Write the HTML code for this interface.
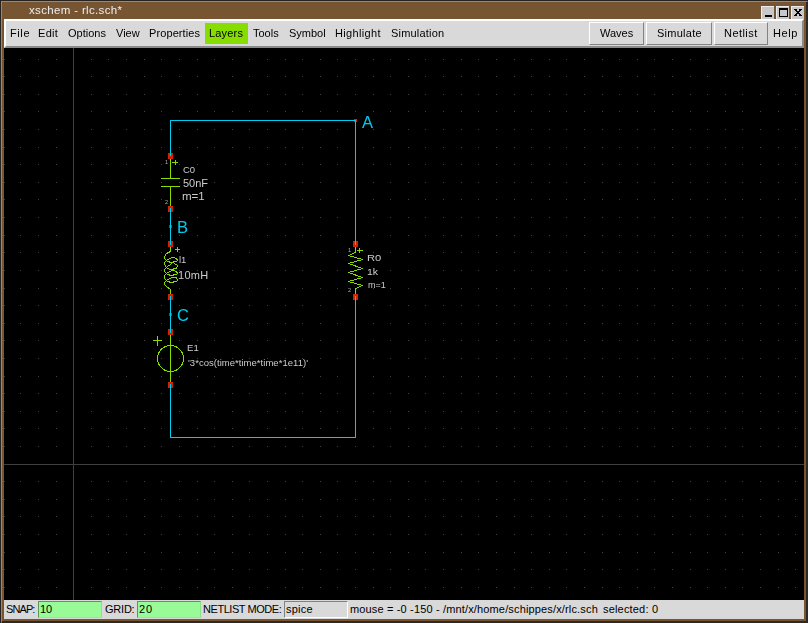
<!DOCTYPE html>
<html><head><meta charset="utf-8"><title>xschem - rlc.sch*</title>
<style>
*{margin:0;padding:0;box-sizing:border-box}
html,body{width:808px;height:623px;overflow:hidden;background:#775533;font-family:"Liberation Sans",sans-serif;position:relative}
.abs{position:absolute}
.t{position:absolute;white-space:pre;font-family:"Liberation Sans",sans-serif}
.btn{position:absolute;background:#d9d9d9;border-top:1px solid #fff;border-left:1px solid #fff;border-right:1px solid #828282;border-bottom:1px solid #828282}
.wb{position:absolute;top:6px;width:13px;height:13px;background:#c8c8c8;border-top:1px solid #ececec;border-left:1px solid #ececec}
</style></head><body>
<div class="abs" style="left:0;top:0;width:808px;height:1px;background:#262320"></div>
<div class="abs" style="left:0;top:0;width:1px;height:623px;background:#262320"></div>
<div class="abs" style="left:1px;top:1px;width:806px;height:1px;background:#c47e3a"></div>
<div class="abs" style="left:1px;top:1px;width:1px;height:621px;background:#c47e3a"></div>
<div class="abs" style="left:806px;top:2px;width:2px;height:621px;background:#2e2822"></div>
<div class="abs" style="left:2px;top:621px;width:806px;height:2px;background:#2e2822"></div>
<div class="wb" style="left:761px"><div class="abs" style="left:3px;top:8px;width:7px;height:2px;background:#000"></div></div>
<div class="wb" style="left:776px"><div class="abs" style="left:2px;top:1px;width:9px;height:9px;border:1px solid #000;border-top-width:2px"></div></div>
<div class="wb" style="left:791px"><div class="abs" style="left:2px;top:2px;width:3px;height:1px;background:#000"></div><div class="abs" style="left:7px;top:2px;width:3px;height:1px;background:#000"></div><div class="abs" style="left:3px;top:3px;width:2px;height:1px;background:#000"></div><div class="abs" style="left:7px;top:3px;width:2px;height:1px;background:#000"></div><div class="abs" style="left:4px;top:4px;width:4px;height:1px;background:#000"></div><div class="abs" style="left:5px;top:5px;width:2px;height:1px;background:#000"></div><div class="abs" style="left:4px;top:6px;width:4px;height:1px;background:#000"></div><div class="abs" style="left:3px;top:7px;width:2px;height:1px;background:#000"></div><div class="abs" style="left:7px;top:7px;width:2px;height:1px;background:#000"></div><div class="abs" style="left:2px;top:8px;width:3px;height:1px;background:#000"></div><div class="abs" style="left:7px;top:8px;width:3px;height:1px;background:#000"></div></div>
<div class="abs" style="left:4px;top:19px;width:800px;height:29px;background:#d9d9d9;border-top:2px solid #fff;border-left:2px solid #fff;border-right:2px solid #8a8a8a;border-bottom:2px solid #8a8a8a"></div>
<div class="abs" style="left:205px;top:23px;width:43px;height:21px;background:#88dd00"></div>
<div class="btn" style="left:589px;top:22px;width:55px;height:23px"></div>
<div class="btn" style="left:646px;top:22px;width:66px;height:23px"></div>
<div class="btn" style="left:714px;top:22px;width:54px;height:23px"></div>
<svg class="abs" style="left:4px;top:48px" width="800" height="552" viewBox="4 48 800 552">
<rect x="4" y="48" width="800" height="552" fill="#000"/>
<g fill="#404040" shape-rendering="crispEdges"><rect x="4" y="59" width="1" height="1"/><rect x="4" y="76" width="1" height="1"/><rect x="4" y="94" width="1" height="1"/><rect x="4" y="111" width="1" height="1"/><rect x="4" y="129" width="1" height="1"/><rect x="4" y="147" width="1" height="1"/><rect x="4" y="164" width="1" height="1"/><rect x="4" y="182" width="1" height="1"/><rect x="4" y="199" width="1" height="1"/><rect x="4" y="217" width="1" height="1"/><rect x="4" y="235" width="1" height="1"/><rect x="4" y="252" width="1" height="1"/><rect x="4" y="270" width="1" height="1"/><rect x="4" y="288" width="1" height="1"/><rect x="4" y="305" width="1" height="1"/><rect x="4" y="323" width="1" height="1"/><rect x="4" y="340" width="1" height="1"/><rect x="4" y="358" width="1" height="1"/><rect x="4" y="376" width="1" height="1"/><rect x="4" y="393" width="1" height="1"/><rect x="4" y="411" width="1" height="1"/><rect x="4" y="428" width="1" height="1"/><rect x="4" y="446" width="1" height="1"/><rect x="4" y="464" width="1" height="1"/><rect x="4" y="481" width="1" height="1"/><rect x="4" y="499" width="1" height="1"/><rect x="4" y="516" width="1" height="1"/><rect x="4" y="534" width="1" height="1"/><rect x="4" y="552" width="1" height="1"/><rect x="4" y="569" width="1" height="1"/><rect x="4" y="587" width="1" height="1"/><rect x="20" y="59" width="1" height="1"/><rect x="20" y="76" width="1" height="1"/><rect x="20" y="94" width="1" height="1"/><rect x="20" y="111" width="1" height="1"/><rect x="20" y="129" width="1" height="1"/><rect x="20" y="147" width="1" height="1"/><rect x="20" y="164" width="1" height="1"/><rect x="20" y="182" width="1" height="1"/><rect x="20" y="199" width="1" height="1"/><rect x="20" y="217" width="1" height="1"/><rect x="20" y="235" width="1" height="1"/><rect x="20" y="252" width="1" height="1"/><rect x="20" y="270" width="1" height="1"/><rect x="20" y="288" width="1" height="1"/><rect x="20" y="305" width="1" height="1"/><rect x="20" y="323" width="1" height="1"/><rect x="20" y="340" width="1" height="1"/><rect x="20" y="358" width="1" height="1"/><rect x="20" y="376" width="1" height="1"/><rect x="20" y="393" width="1" height="1"/><rect x="20" y="411" width="1" height="1"/><rect x="20" y="428" width="1" height="1"/><rect x="20" y="446" width="1" height="1"/><rect x="20" y="464" width="1" height="1"/><rect x="20" y="481" width="1" height="1"/><rect x="20" y="499" width="1" height="1"/><rect x="20" y="516" width="1" height="1"/><rect x="20" y="534" width="1" height="1"/><rect x="20" y="552" width="1" height="1"/><rect x="20" y="569" width="1" height="1"/><rect x="20" y="587" width="1" height="1"/><rect x="38" y="59" width="1" height="1"/><rect x="38" y="76" width="1" height="1"/><rect x="38" y="94" width="1" height="1"/><rect x="38" y="111" width="1" height="1"/><rect x="38" y="129" width="1" height="1"/><rect x="38" y="147" width="1" height="1"/><rect x="38" y="164" width="1" height="1"/><rect x="38" y="182" width="1" height="1"/><rect x="38" y="199" width="1" height="1"/><rect x="38" y="217" width="1" height="1"/><rect x="38" y="235" width="1" height="1"/><rect x="38" y="252" width="1" height="1"/><rect x="38" y="270" width="1" height="1"/><rect x="38" y="288" width="1" height="1"/><rect x="38" y="305" width="1" height="1"/><rect x="38" y="323" width="1" height="1"/><rect x="38" y="340" width="1" height="1"/><rect x="38" y="358" width="1" height="1"/><rect x="38" y="376" width="1" height="1"/><rect x="38" y="393" width="1" height="1"/><rect x="38" y="411" width="1" height="1"/><rect x="38" y="428" width="1" height="1"/><rect x="38" y="446" width="1" height="1"/><rect x="38" y="464" width="1" height="1"/><rect x="38" y="481" width="1" height="1"/><rect x="38" y="499" width="1" height="1"/><rect x="38" y="516" width="1" height="1"/><rect x="38" y="534" width="1" height="1"/><rect x="38" y="552" width="1" height="1"/><rect x="38" y="569" width="1" height="1"/><rect x="38" y="587" width="1" height="1"/><rect x="56" y="59" width="1" height="1"/><rect x="56" y="76" width="1" height="1"/><rect x="56" y="94" width="1" height="1"/><rect x="56" y="111" width="1" height="1"/><rect x="56" y="129" width="1" height="1"/><rect x="56" y="147" width="1" height="1"/><rect x="56" y="164" width="1" height="1"/><rect x="56" y="182" width="1" height="1"/><rect x="56" y="199" width="1" height="1"/><rect x="56" y="217" width="1" height="1"/><rect x="56" y="235" width="1" height="1"/><rect x="56" y="252" width="1" height="1"/><rect x="56" y="270" width="1" height="1"/><rect x="56" y="288" width="1" height="1"/><rect x="56" y="305" width="1" height="1"/><rect x="56" y="323" width="1" height="1"/><rect x="56" y="340" width="1" height="1"/><rect x="56" y="358" width="1" height="1"/><rect x="56" y="376" width="1" height="1"/><rect x="56" y="393" width="1" height="1"/><rect x="56" y="411" width="1" height="1"/><rect x="56" y="428" width="1" height="1"/><rect x="56" y="446" width="1" height="1"/><rect x="56" y="464" width="1" height="1"/><rect x="56" y="481" width="1" height="1"/><rect x="56" y="499" width="1" height="1"/><rect x="56" y="516" width="1" height="1"/><rect x="56" y="534" width="1" height="1"/><rect x="56" y="552" width="1" height="1"/><rect x="56" y="569" width="1" height="1"/><rect x="56" y="587" width="1" height="1"/><rect x="73" y="59" width="1" height="1"/><rect x="73" y="76" width="1" height="1"/><rect x="73" y="94" width="1" height="1"/><rect x="73" y="111" width="1" height="1"/><rect x="73" y="129" width="1" height="1"/><rect x="73" y="147" width="1" height="1"/><rect x="73" y="164" width="1" height="1"/><rect x="73" y="182" width="1" height="1"/><rect x="73" y="199" width="1" height="1"/><rect x="73" y="217" width="1" height="1"/><rect x="73" y="235" width="1" height="1"/><rect x="73" y="252" width="1" height="1"/><rect x="73" y="270" width="1" height="1"/><rect x="73" y="288" width="1" height="1"/><rect x="73" y="305" width="1" height="1"/><rect x="73" y="323" width="1" height="1"/><rect x="73" y="340" width="1" height="1"/><rect x="73" y="358" width="1" height="1"/><rect x="73" y="376" width="1" height="1"/><rect x="73" y="393" width="1" height="1"/><rect x="73" y="411" width="1" height="1"/><rect x="73" y="428" width="1" height="1"/><rect x="73" y="446" width="1" height="1"/><rect x="73" y="464" width="1" height="1"/><rect x="73" y="481" width="1" height="1"/><rect x="73" y="499" width="1" height="1"/><rect x="73" y="516" width="1" height="1"/><rect x="73" y="534" width="1" height="1"/><rect x="73" y="552" width="1" height="1"/><rect x="73" y="569" width="1" height="1"/><rect x="73" y="587" width="1" height="1"/><rect x="91" y="59" width="1" height="1"/><rect x="91" y="76" width="1" height="1"/><rect x="91" y="94" width="1" height="1"/><rect x="91" y="111" width="1" height="1"/><rect x="91" y="129" width="1" height="1"/><rect x="91" y="147" width="1" height="1"/><rect x="91" y="164" width="1" height="1"/><rect x="91" y="182" width="1" height="1"/><rect x="91" y="199" width="1" height="1"/><rect x="91" y="217" width="1" height="1"/><rect x="91" y="235" width="1" height="1"/><rect x="91" y="252" width="1" height="1"/><rect x="91" y="270" width="1" height="1"/><rect x="91" y="288" width="1" height="1"/><rect x="91" y="305" width="1" height="1"/><rect x="91" y="323" width="1" height="1"/><rect x="91" y="340" width="1" height="1"/><rect x="91" y="358" width="1" height="1"/><rect x="91" y="376" width="1" height="1"/><rect x="91" y="393" width="1" height="1"/><rect x="91" y="411" width="1" height="1"/><rect x="91" y="428" width="1" height="1"/><rect x="91" y="446" width="1" height="1"/><rect x="91" y="464" width="1" height="1"/><rect x="91" y="481" width="1" height="1"/><rect x="91" y="499" width="1" height="1"/><rect x="91" y="516" width="1" height="1"/><rect x="91" y="534" width="1" height="1"/><rect x="91" y="552" width="1" height="1"/><rect x="91" y="569" width="1" height="1"/><rect x="91" y="587" width="1" height="1"/><rect x="108" y="59" width="1" height="1"/><rect x="108" y="76" width="1" height="1"/><rect x="108" y="94" width="1" height="1"/><rect x="108" y="111" width="1" height="1"/><rect x="108" y="129" width="1" height="1"/><rect x="108" y="147" width="1" height="1"/><rect x="108" y="164" width="1" height="1"/><rect x="108" y="182" width="1" height="1"/><rect x="108" y="199" width="1" height="1"/><rect x="108" y="217" width="1" height="1"/><rect x="108" y="235" width="1" height="1"/><rect x="108" y="252" width="1" height="1"/><rect x="108" y="270" width="1" height="1"/><rect x="108" y="288" width="1" height="1"/><rect x="108" y="305" width="1" height="1"/><rect x="108" y="323" width="1" height="1"/><rect x="108" y="340" width="1" height="1"/><rect x="108" y="358" width="1" height="1"/><rect x="108" y="376" width="1" height="1"/><rect x="108" y="393" width="1" height="1"/><rect x="108" y="411" width="1" height="1"/><rect x="108" y="428" width="1" height="1"/><rect x="108" y="446" width="1" height="1"/><rect x="108" y="464" width="1" height="1"/><rect x="108" y="481" width="1" height="1"/><rect x="108" y="499" width="1" height="1"/><rect x="108" y="516" width="1" height="1"/><rect x="108" y="534" width="1" height="1"/><rect x="108" y="552" width="1" height="1"/><rect x="108" y="569" width="1" height="1"/><rect x="108" y="587" width="1" height="1"/><rect x="126" y="59" width="1" height="1"/><rect x="126" y="76" width="1" height="1"/><rect x="126" y="94" width="1" height="1"/><rect x="126" y="111" width="1" height="1"/><rect x="126" y="129" width="1" height="1"/><rect x="126" y="147" width="1" height="1"/><rect x="126" y="164" width="1" height="1"/><rect x="126" y="182" width="1" height="1"/><rect x="126" y="199" width="1" height="1"/><rect x="126" y="217" width="1" height="1"/><rect x="126" y="235" width="1" height="1"/><rect x="126" y="252" width="1" height="1"/><rect x="126" y="270" width="1" height="1"/><rect x="126" y="288" width="1" height="1"/><rect x="126" y="305" width="1" height="1"/><rect x="126" y="323" width="1" height="1"/><rect x="126" y="340" width="1" height="1"/><rect x="126" y="358" width="1" height="1"/><rect x="126" y="376" width="1" height="1"/><rect x="126" y="393" width="1" height="1"/><rect x="126" y="411" width="1" height="1"/><rect x="126" y="428" width="1" height="1"/><rect x="126" y="446" width="1" height="1"/><rect x="126" y="464" width="1" height="1"/><rect x="126" y="481" width="1" height="1"/><rect x="126" y="499" width="1" height="1"/><rect x="126" y="516" width="1" height="1"/><rect x="126" y="534" width="1" height="1"/><rect x="126" y="552" width="1" height="1"/><rect x="126" y="569" width="1" height="1"/><rect x="126" y="587" width="1" height="1"/><rect x="144" y="59" width="1" height="1"/><rect x="144" y="76" width="1" height="1"/><rect x="144" y="94" width="1" height="1"/><rect x="144" y="111" width="1" height="1"/><rect x="144" y="129" width="1" height="1"/><rect x="144" y="147" width="1" height="1"/><rect x="144" y="164" width="1" height="1"/><rect x="144" y="182" width="1" height="1"/><rect x="144" y="199" width="1" height="1"/><rect x="144" y="217" width="1" height="1"/><rect x="144" y="235" width="1" height="1"/><rect x="144" y="252" width="1" height="1"/><rect x="144" y="270" width="1" height="1"/><rect x="144" y="288" width="1" height="1"/><rect x="144" y="305" width="1" height="1"/><rect x="144" y="323" width="1" height="1"/><rect x="144" y="340" width="1" height="1"/><rect x="144" y="358" width="1" height="1"/><rect x="144" y="376" width="1" height="1"/><rect x="144" y="393" width="1" height="1"/><rect x="144" y="411" width="1" height="1"/><rect x="144" y="428" width="1" height="1"/><rect x="144" y="446" width="1" height="1"/><rect x="144" y="464" width="1" height="1"/><rect x="144" y="481" width="1" height="1"/><rect x="144" y="499" width="1" height="1"/><rect x="144" y="516" width="1" height="1"/><rect x="144" y="534" width="1" height="1"/><rect x="144" y="552" width="1" height="1"/><rect x="144" y="569" width="1" height="1"/><rect x="144" y="587" width="1" height="1"/><rect x="161" y="59" width="1" height="1"/><rect x="161" y="76" width="1" height="1"/><rect x="161" y="94" width="1" height="1"/><rect x="161" y="111" width="1" height="1"/><rect x="161" y="129" width="1" height="1"/><rect x="161" y="147" width="1" height="1"/><rect x="161" y="164" width="1" height="1"/><rect x="161" y="182" width="1" height="1"/><rect x="161" y="199" width="1" height="1"/><rect x="161" y="217" width="1" height="1"/><rect x="161" y="235" width="1" height="1"/><rect x="161" y="252" width="1" height="1"/><rect x="161" y="270" width="1" height="1"/><rect x="161" y="288" width="1" height="1"/><rect x="161" y="305" width="1" height="1"/><rect x="161" y="323" width="1" height="1"/><rect x="161" y="340" width="1" height="1"/><rect x="161" y="358" width="1" height="1"/><rect x="161" y="376" width="1" height="1"/><rect x="161" y="393" width="1" height="1"/><rect x="161" y="411" width="1" height="1"/><rect x="161" y="428" width="1" height="1"/><rect x="161" y="446" width="1" height="1"/><rect x="161" y="464" width="1" height="1"/><rect x="161" y="481" width="1" height="1"/><rect x="161" y="499" width="1" height="1"/><rect x="161" y="516" width="1" height="1"/><rect x="161" y="534" width="1" height="1"/><rect x="161" y="552" width="1" height="1"/><rect x="161" y="569" width="1" height="1"/><rect x="161" y="587" width="1" height="1"/><rect x="179" y="59" width="1" height="1"/><rect x="179" y="76" width="1" height="1"/><rect x="179" y="94" width="1" height="1"/><rect x="179" y="111" width="1" height="1"/><rect x="179" y="129" width="1" height="1"/><rect x="179" y="147" width="1" height="1"/><rect x="179" y="164" width="1" height="1"/><rect x="179" y="182" width="1" height="1"/><rect x="179" y="199" width="1" height="1"/><rect x="179" y="217" width="1" height="1"/><rect x="179" y="235" width="1" height="1"/><rect x="179" y="252" width="1" height="1"/><rect x="179" y="270" width="1" height="1"/><rect x="179" y="288" width="1" height="1"/><rect x="179" y="305" width="1" height="1"/><rect x="179" y="323" width="1" height="1"/><rect x="179" y="340" width="1" height="1"/><rect x="179" y="358" width="1" height="1"/><rect x="179" y="376" width="1" height="1"/><rect x="179" y="393" width="1" height="1"/><rect x="179" y="411" width="1" height="1"/><rect x="179" y="428" width="1" height="1"/><rect x="179" y="446" width="1" height="1"/><rect x="179" y="464" width="1" height="1"/><rect x="179" y="481" width="1" height="1"/><rect x="179" y="499" width="1" height="1"/><rect x="179" y="516" width="1" height="1"/><rect x="179" y="534" width="1" height="1"/><rect x="179" y="552" width="1" height="1"/><rect x="179" y="569" width="1" height="1"/><rect x="179" y="587" width="1" height="1"/><rect x="197" y="59" width="1" height="1"/><rect x="197" y="76" width="1" height="1"/><rect x="197" y="94" width="1" height="1"/><rect x="197" y="111" width="1" height="1"/><rect x="197" y="129" width="1" height="1"/><rect x="197" y="147" width="1" height="1"/><rect x="197" y="164" width="1" height="1"/><rect x="197" y="182" width="1" height="1"/><rect x="197" y="199" width="1" height="1"/><rect x="197" y="217" width="1" height="1"/><rect x="197" y="235" width="1" height="1"/><rect x="197" y="252" width="1" height="1"/><rect x="197" y="270" width="1" height="1"/><rect x="197" y="288" width="1" height="1"/><rect x="197" y="305" width="1" height="1"/><rect x="197" y="323" width="1" height="1"/><rect x="197" y="340" width="1" height="1"/><rect x="197" y="358" width="1" height="1"/><rect x="197" y="376" width="1" height="1"/><rect x="197" y="393" width="1" height="1"/><rect x="197" y="411" width="1" height="1"/><rect x="197" y="428" width="1" height="1"/><rect x="197" y="446" width="1" height="1"/><rect x="197" y="464" width="1" height="1"/><rect x="197" y="481" width="1" height="1"/><rect x="197" y="499" width="1" height="1"/><rect x="197" y="516" width="1" height="1"/><rect x="197" y="534" width="1" height="1"/><rect x="197" y="552" width="1" height="1"/><rect x="197" y="569" width="1" height="1"/><rect x="197" y="587" width="1" height="1"/><rect x="214" y="59" width="1" height="1"/><rect x="214" y="76" width="1" height="1"/><rect x="214" y="94" width="1" height="1"/><rect x="214" y="111" width="1" height="1"/><rect x="214" y="129" width="1" height="1"/><rect x="214" y="147" width="1" height="1"/><rect x="214" y="164" width="1" height="1"/><rect x="214" y="182" width="1" height="1"/><rect x="214" y="199" width="1" height="1"/><rect x="214" y="217" width="1" height="1"/><rect x="214" y="235" width="1" height="1"/><rect x="214" y="252" width="1" height="1"/><rect x="214" y="270" width="1" height="1"/><rect x="214" y="288" width="1" height="1"/><rect x="214" y="305" width="1" height="1"/><rect x="214" y="323" width="1" height="1"/><rect x="214" y="340" width="1" height="1"/><rect x="214" y="358" width="1" height="1"/><rect x="214" y="376" width="1" height="1"/><rect x="214" y="393" width="1" height="1"/><rect x="214" y="411" width="1" height="1"/><rect x="214" y="428" width="1" height="1"/><rect x="214" y="446" width="1" height="1"/><rect x="214" y="464" width="1" height="1"/><rect x="214" y="481" width="1" height="1"/><rect x="214" y="499" width="1" height="1"/><rect x="214" y="516" width="1" height="1"/><rect x="214" y="534" width="1" height="1"/><rect x="214" y="552" width="1" height="1"/><rect x="214" y="569" width="1" height="1"/><rect x="214" y="587" width="1" height="1"/><rect x="232" y="59" width="1" height="1"/><rect x="232" y="76" width="1" height="1"/><rect x="232" y="94" width="1" height="1"/><rect x="232" y="111" width="1" height="1"/><rect x="232" y="129" width="1" height="1"/><rect x="232" y="147" width="1" height="1"/><rect x="232" y="164" width="1" height="1"/><rect x="232" y="182" width="1" height="1"/><rect x="232" y="199" width="1" height="1"/><rect x="232" y="217" width="1" height="1"/><rect x="232" y="235" width="1" height="1"/><rect x="232" y="252" width="1" height="1"/><rect x="232" y="270" width="1" height="1"/><rect x="232" y="288" width="1" height="1"/><rect x="232" y="305" width="1" height="1"/><rect x="232" y="323" width="1" height="1"/><rect x="232" y="340" width="1" height="1"/><rect x="232" y="358" width="1" height="1"/><rect x="232" y="376" width="1" height="1"/><rect x="232" y="393" width="1" height="1"/><rect x="232" y="411" width="1" height="1"/><rect x="232" y="428" width="1" height="1"/><rect x="232" y="446" width="1" height="1"/><rect x="232" y="464" width="1" height="1"/><rect x="232" y="481" width="1" height="1"/><rect x="232" y="499" width="1" height="1"/><rect x="232" y="516" width="1" height="1"/><rect x="232" y="534" width="1" height="1"/><rect x="232" y="552" width="1" height="1"/><rect x="232" y="569" width="1" height="1"/><rect x="232" y="587" width="1" height="1"/><rect x="249" y="59" width="1" height="1"/><rect x="249" y="76" width="1" height="1"/><rect x="249" y="94" width="1" height="1"/><rect x="249" y="111" width="1" height="1"/><rect x="249" y="129" width="1" height="1"/><rect x="249" y="147" width="1" height="1"/><rect x="249" y="164" width="1" height="1"/><rect x="249" y="182" width="1" height="1"/><rect x="249" y="199" width="1" height="1"/><rect x="249" y="217" width="1" height="1"/><rect x="249" y="235" width="1" height="1"/><rect x="249" y="252" width="1" height="1"/><rect x="249" y="270" width="1" height="1"/><rect x="249" y="288" width="1" height="1"/><rect x="249" y="305" width="1" height="1"/><rect x="249" y="323" width="1" height="1"/><rect x="249" y="340" width="1" height="1"/><rect x="249" y="358" width="1" height="1"/><rect x="249" y="376" width="1" height="1"/><rect x="249" y="393" width="1" height="1"/><rect x="249" y="411" width="1" height="1"/><rect x="249" y="428" width="1" height="1"/><rect x="249" y="446" width="1" height="1"/><rect x="249" y="464" width="1" height="1"/><rect x="249" y="481" width="1" height="1"/><rect x="249" y="499" width="1" height="1"/><rect x="249" y="516" width="1" height="1"/><rect x="249" y="534" width="1" height="1"/><rect x="249" y="552" width="1" height="1"/><rect x="249" y="569" width="1" height="1"/><rect x="249" y="587" width="1" height="1"/><rect x="267" y="59" width="1" height="1"/><rect x="267" y="76" width="1" height="1"/><rect x="267" y="94" width="1" height="1"/><rect x="267" y="111" width="1" height="1"/><rect x="267" y="129" width="1" height="1"/><rect x="267" y="147" width="1" height="1"/><rect x="267" y="164" width="1" height="1"/><rect x="267" y="182" width="1" height="1"/><rect x="267" y="199" width="1" height="1"/><rect x="267" y="217" width="1" height="1"/><rect x="267" y="235" width="1" height="1"/><rect x="267" y="252" width="1" height="1"/><rect x="267" y="270" width="1" height="1"/><rect x="267" y="288" width="1" height="1"/><rect x="267" y="305" width="1" height="1"/><rect x="267" y="323" width="1" height="1"/><rect x="267" y="340" width="1" height="1"/><rect x="267" y="358" width="1" height="1"/><rect x="267" y="376" width="1" height="1"/><rect x="267" y="393" width="1" height="1"/><rect x="267" y="411" width="1" height="1"/><rect x="267" y="428" width="1" height="1"/><rect x="267" y="446" width="1" height="1"/><rect x="267" y="464" width="1" height="1"/><rect x="267" y="481" width="1" height="1"/><rect x="267" y="499" width="1" height="1"/><rect x="267" y="516" width="1" height="1"/><rect x="267" y="534" width="1" height="1"/><rect x="267" y="552" width="1" height="1"/><rect x="267" y="569" width="1" height="1"/><rect x="267" y="587" width="1" height="1"/><rect x="285" y="59" width="1" height="1"/><rect x="285" y="76" width="1" height="1"/><rect x="285" y="94" width="1" height="1"/><rect x="285" y="111" width="1" height="1"/><rect x="285" y="129" width="1" height="1"/><rect x="285" y="147" width="1" height="1"/><rect x="285" y="164" width="1" height="1"/><rect x="285" y="182" width="1" height="1"/><rect x="285" y="199" width="1" height="1"/><rect x="285" y="217" width="1" height="1"/><rect x="285" y="235" width="1" height="1"/><rect x="285" y="252" width="1" height="1"/><rect x="285" y="270" width="1" height="1"/><rect x="285" y="288" width="1" height="1"/><rect x="285" y="305" width="1" height="1"/><rect x="285" y="323" width="1" height="1"/><rect x="285" y="340" width="1" height="1"/><rect x="285" y="358" width="1" height="1"/><rect x="285" y="376" width="1" height="1"/><rect x="285" y="393" width="1" height="1"/><rect x="285" y="411" width="1" height="1"/><rect x="285" y="428" width="1" height="1"/><rect x="285" y="446" width="1" height="1"/><rect x="285" y="464" width="1" height="1"/><rect x="285" y="481" width="1" height="1"/><rect x="285" y="499" width="1" height="1"/><rect x="285" y="516" width="1" height="1"/><rect x="285" y="534" width="1" height="1"/><rect x="285" y="552" width="1" height="1"/><rect x="285" y="569" width="1" height="1"/><rect x="285" y="587" width="1" height="1"/><rect x="302" y="59" width="1" height="1"/><rect x="302" y="76" width="1" height="1"/><rect x="302" y="94" width="1" height="1"/><rect x="302" y="111" width="1" height="1"/><rect x="302" y="129" width="1" height="1"/><rect x="302" y="147" width="1" height="1"/><rect x="302" y="164" width="1" height="1"/><rect x="302" y="182" width="1" height="1"/><rect x="302" y="199" width="1" height="1"/><rect x="302" y="217" width="1" height="1"/><rect x="302" y="235" width="1" height="1"/><rect x="302" y="252" width="1" height="1"/><rect x="302" y="270" width="1" height="1"/><rect x="302" y="288" width="1" height="1"/><rect x="302" y="305" width="1" height="1"/><rect x="302" y="323" width="1" height="1"/><rect x="302" y="340" width="1" height="1"/><rect x="302" y="358" width="1" height="1"/><rect x="302" y="376" width="1" height="1"/><rect x="302" y="393" width="1" height="1"/><rect x="302" y="411" width="1" height="1"/><rect x="302" y="428" width="1" height="1"/><rect x="302" y="446" width="1" height="1"/><rect x="302" y="464" width="1" height="1"/><rect x="302" y="481" width="1" height="1"/><rect x="302" y="499" width="1" height="1"/><rect x="302" y="516" width="1" height="1"/><rect x="302" y="534" width="1" height="1"/><rect x="302" y="552" width="1" height="1"/><rect x="302" y="569" width="1" height="1"/><rect x="302" y="587" width="1" height="1"/><rect x="320" y="59" width="1" height="1"/><rect x="320" y="76" width="1" height="1"/><rect x="320" y="94" width="1" height="1"/><rect x="320" y="111" width="1" height="1"/><rect x="320" y="129" width="1" height="1"/><rect x="320" y="147" width="1" height="1"/><rect x="320" y="164" width="1" height="1"/><rect x="320" y="182" width="1" height="1"/><rect x="320" y="199" width="1" height="1"/><rect x="320" y="217" width="1" height="1"/><rect x="320" y="235" width="1" height="1"/><rect x="320" y="252" width="1" height="1"/><rect x="320" y="270" width="1" height="1"/><rect x="320" y="288" width="1" height="1"/><rect x="320" y="305" width="1" height="1"/><rect x="320" y="323" width="1" height="1"/><rect x="320" y="340" width="1" height="1"/><rect x="320" y="358" width="1" height="1"/><rect x="320" y="376" width="1" height="1"/><rect x="320" y="393" width="1" height="1"/><rect x="320" y="411" width="1" height="1"/><rect x="320" y="428" width="1" height="1"/><rect x="320" y="446" width="1" height="1"/><rect x="320" y="464" width="1" height="1"/><rect x="320" y="481" width="1" height="1"/><rect x="320" y="499" width="1" height="1"/><rect x="320" y="516" width="1" height="1"/><rect x="320" y="534" width="1" height="1"/><rect x="320" y="552" width="1" height="1"/><rect x="320" y="569" width="1" height="1"/><rect x="320" y="587" width="1" height="1"/><rect x="337" y="59" width="1" height="1"/><rect x="337" y="76" width="1" height="1"/><rect x="337" y="94" width="1" height="1"/><rect x="337" y="111" width="1" height="1"/><rect x="337" y="129" width="1" height="1"/><rect x="337" y="147" width="1" height="1"/><rect x="337" y="164" width="1" height="1"/><rect x="337" y="182" width="1" height="1"/><rect x="337" y="199" width="1" height="1"/><rect x="337" y="217" width="1" height="1"/><rect x="337" y="235" width="1" height="1"/><rect x="337" y="252" width="1" height="1"/><rect x="337" y="270" width="1" height="1"/><rect x="337" y="288" width="1" height="1"/><rect x="337" y="305" width="1" height="1"/><rect x="337" y="323" width="1" height="1"/><rect x="337" y="340" width="1" height="1"/><rect x="337" y="358" width="1" height="1"/><rect x="337" y="376" width="1" height="1"/><rect x="337" y="393" width="1" height="1"/><rect x="337" y="411" width="1" height="1"/><rect x="337" y="428" width="1" height="1"/><rect x="337" y="446" width="1" height="1"/><rect x="337" y="464" width="1" height="1"/><rect x="337" y="481" width="1" height="1"/><rect x="337" y="499" width="1" height="1"/><rect x="337" y="516" width="1" height="1"/><rect x="337" y="534" width="1" height="1"/><rect x="337" y="552" width="1" height="1"/><rect x="337" y="569" width="1" height="1"/><rect x="337" y="587" width="1" height="1"/><rect x="355" y="59" width="1" height="1"/><rect x="355" y="76" width="1" height="1"/><rect x="355" y="94" width="1" height="1"/><rect x="355" y="111" width="1" height="1"/><rect x="355" y="129" width="1" height="1"/><rect x="355" y="147" width="1" height="1"/><rect x="355" y="164" width="1" height="1"/><rect x="355" y="182" width="1" height="1"/><rect x="355" y="199" width="1" height="1"/><rect x="355" y="217" width="1" height="1"/><rect x="355" y="235" width="1" height="1"/><rect x="355" y="252" width="1" height="1"/><rect x="355" y="270" width="1" height="1"/><rect x="355" y="288" width="1" height="1"/><rect x="355" y="305" width="1" height="1"/><rect x="355" y="323" width="1" height="1"/><rect x="355" y="340" width="1" height="1"/><rect x="355" y="358" width="1" height="1"/><rect x="355" y="376" width="1" height="1"/><rect x="355" y="393" width="1" height="1"/><rect x="355" y="411" width="1" height="1"/><rect x="355" y="428" width="1" height="1"/><rect x="355" y="446" width="1" height="1"/><rect x="355" y="464" width="1" height="1"/><rect x="355" y="481" width="1" height="1"/><rect x="355" y="499" width="1" height="1"/><rect x="355" y="516" width="1" height="1"/><rect x="355" y="534" width="1" height="1"/><rect x="355" y="552" width="1" height="1"/><rect x="355" y="569" width="1" height="1"/><rect x="355" y="587" width="1" height="1"/><rect x="373" y="59" width="1" height="1"/><rect x="373" y="76" width="1" height="1"/><rect x="373" y="94" width="1" height="1"/><rect x="373" y="111" width="1" height="1"/><rect x="373" y="129" width="1" height="1"/><rect x="373" y="147" width="1" height="1"/><rect x="373" y="164" width="1" height="1"/><rect x="373" y="182" width="1" height="1"/><rect x="373" y="199" width="1" height="1"/><rect x="373" y="217" width="1" height="1"/><rect x="373" y="235" width="1" height="1"/><rect x="373" y="252" width="1" height="1"/><rect x="373" y="270" width="1" height="1"/><rect x="373" y="288" width="1" height="1"/><rect x="373" y="305" width="1" height="1"/><rect x="373" y="323" width="1" height="1"/><rect x="373" y="340" width="1" height="1"/><rect x="373" y="358" width="1" height="1"/><rect x="373" y="376" width="1" height="1"/><rect x="373" y="393" width="1" height="1"/><rect x="373" y="411" width="1" height="1"/><rect x="373" y="428" width="1" height="1"/><rect x="373" y="446" width="1" height="1"/><rect x="373" y="464" width="1" height="1"/><rect x="373" y="481" width="1" height="1"/><rect x="373" y="499" width="1" height="1"/><rect x="373" y="516" width="1" height="1"/><rect x="373" y="534" width="1" height="1"/><rect x="373" y="552" width="1" height="1"/><rect x="373" y="569" width="1" height="1"/><rect x="373" y="587" width="1" height="1"/><rect x="390" y="59" width="1" height="1"/><rect x="390" y="76" width="1" height="1"/><rect x="390" y="94" width="1" height="1"/><rect x="390" y="111" width="1" height="1"/><rect x="390" y="129" width="1" height="1"/><rect x="390" y="147" width="1" height="1"/><rect x="390" y="164" width="1" height="1"/><rect x="390" y="182" width="1" height="1"/><rect x="390" y="199" width="1" height="1"/><rect x="390" y="217" width="1" height="1"/><rect x="390" y="235" width="1" height="1"/><rect x="390" y="252" width="1" height="1"/><rect x="390" y="270" width="1" height="1"/><rect x="390" y="288" width="1" height="1"/><rect x="390" y="305" width="1" height="1"/><rect x="390" y="323" width="1" height="1"/><rect x="390" y="340" width="1" height="1"/><rect x="390" y="358" width="1" height="1"/><rect x="390" y="376" width="1" height="1"/><rect x="390" y="393" width="1" height="1"/><rect x="390" y="411" width="1" height="1"/><rect x="390" y="428" width="1" height="1"/><rect x="390" y="446" width="1" height="1"/><rect x="390" y="464" width="1" height="1"/><rect x="390" y="481" width="1" height="1"/><rect x="390" y="499" width="1" height="1"/><rect x="390" y="516" width="1" height="1"/><rect x="390" y="534" width="1" height="1"/><rect x="390" y="552" width="1" height="1"/><rect x="390" y="569" width="1" height="1"/><rect x="390" y="587" width="1" height="1"/><rect x="408" y="59" width="1" height="1"/><rect x="408" y="76" width="1" height="1"/><rect x="408" y="94" width="1" height="1"/><rect x="408" y="111" width="1" height="1"/><rect x="408" y="129" width="1" height="1"/><rect x="408" y="147" width="1" height="1"/><rect x="408" y="164" width="1" height="1"/><rect x="408" y="182" width="1" height="1"/><rect x="408" y="199" width="1" height="1"/><rect x="408" y="217" width="1" height="1"/><rect x="408" y="235" width="1" height="1"/><rect x="408" y="252" width="1" height="1"/><rect x="408" y="270" width="1" height="1"/><rect x="408" y="288" width="1" height="1"/><rect x="408" y="305" width="1" height="1"/><rect x="408" y="323" width="1" height="1"/><rect x="408" y="340" width="1" height="1"/><rect x="408" y="358" width="1" height="1"/><rect x="408" y="376" width="1" height="1"/><rect x="408" y="393" width="1" height="1"/><rect x="408" y="411" width="1" height="1"/><rect x="408" y="428" width="1" height="1"/><rect x="408" y="446" width="1" height="1"/><rect x="408" y="464" width="1" height="1"/><rect x="408" y="481" width="1" height="1"/><rect x="408" y="499" width="1" height="1"/><rect x="408" y="516" width="1" height="1"/><rect x="408" y="534" width="1" height="1"/><rect x="408" y="552" width="1" height="1"/><rect x="408" y="569" width="1" height="1"/><rect x="408" y="587" width="1" height="1"/><rect x="425" y="59" width="1" height="1"/><rect x="425" y="76" width="1" height="1"/><rect x="425" y="94" width="1" height="1"/><rect x="425" y="111" width="1" height="1"/><rect x="425" y="129" width="1" height="1"/><rect x="425" y="147" width="1" height="1"/><rect x="425" y="164" width="1" height="1"/><rect x="425" y="182" width="1" height="1"/><rect x="425" y="199" width="1" height="1"/><rect x="425" y="217" width="1" height="1"/><rect x="425" y="235" width="1" height="1"/><rect x="425" y="252" width="1" height="1"/><rect x="425" y="270" width="1" height="1"/><rect x="425" y="288" width="1" height="1"/><rect x="425" y="305" width="1" height="1"/><rect x="425" y="323" width="1" height="1"/><rect x="425" y="340" width="1" height="1"/><rect x="425" y="358" width="1" height="1"/><rect x="425" y="376" width="1" height="1"/><rect x="425" y="393" width="1" height="1"/><rect x="425" y="411" width="1" height="1"/><rect x="425" y="428" width="1" height="1"/><rect x="425" y="446" width="1" height="1"/><rect x="425" y="464" width="1" height="1"/><rect x="425" y="481" width="1" height="1"/><rect x="425" y="499" width="1" height="1"/><rect x="425" y="516" width="1" height="1"/><rect x="425" y="534" width="1" height="1"/><rect x="425" y="552" width="1" height="1"/><rect x="425" y="569" width="1" height="1"/><rect x="425" y="587" width="1" height="1"/><rect x="443" y="59" width="1" height="1"/><rect x="443" y="76" width="1" height="1"/><rect x="443" y="94" width="1" height="1"/><rect x="443" y="111" width="1" height="1"/><rect x="443" y="129" width="1" height="1"/><rect x="443" y="147" width="1" height="1"/><rect x="443" y="164" width="1" height="1"/><rect x="443" y="182" width="1" height="1"/><rect x="443" y="199" width="1" height="1"/><rect x="443" y="217" width="1" height="1"/><rect x="443" y="235" width="1" height="1"/><rect x="443" y="252" width="1" height="1"/><rect x="443" y="270" width="1" height="1"/><rect x="443" y="288" width="1" height="1"/><rect x="443" y="305" width="1" height="1"/><rect x="443" y="323" width="1" height="1"/><rect x="443" y="340" width="1" height="1"/><rect x="443" y="358" width="1" height="1"/><rect x="443" y="376" width="1" height="1"/><rect x="443" y="393" width="1" height="1"/><rect x="443" y="411" width="1" height="1"/><rect x="443" y="428" width="1" height="1"/><rect x="443" y="446" width="1" height="1"/><rect x="443" y="464" width="1" height="1"/><rect x="443" y="481" width="1" height="1"/><rect x="443" y="499" width="1" height="1"/><rect x="443" y="516" width="1" height="1"/><rect x="443" y="534" width="1" height="1"/><rect x="443" y="552" width="1" height="1"/><rect x="443" y="569" width="1" height="1"/><rect x="443" y="587" width="1" height="1"/><rect x="461" y="59" width="1" height="1"/><rect x="461" y="76" width="1" height="1"/><rect x="461" y="94" width="1" height="1"/><rect x="461" y="111" width="1" height="1"/><rect x="461" y="129" width="1" height="1"/><rect x="461" y="147" width="1" height="1"/><rect x="461" y="164" width="1" height="1"/><rect x="461" y="182" width="1" height="1"/><rect x="461" y="199" width="1" height="1"/><rect x="461" y="217" width="1" height="1"/><rect x="461" y="235" width="1" height="1"/><rect x="461" y="252" width="1" height="1"/><rect x="461" y="270" width="1" height="1"/><rect x="461" y="288" width="1" height="1"/><rect x="461" y="305" width="1" height="1"/><rect x="461" y="323" width="1" height="1"/><rect x="461" y="340" width="1" height="1"/><rect x="461" y="358" width="1" height="1"/><rect x="461" y="376" width="1" height="1"/><rect x="461" y="393" width="1" height="1"/><rect x="461" y="411" width="1" height="1"/><rect x="461" y="428" width="1" height="1"/><rect x="461" y="446" width="1" height="1"/><rect x="461" y="464" width="1" height="1"/><rect x="461" y="481" width="1" height="1"/><rect x="461" y="499" width="1" height="1"/><rect x="461" y="516" width="1" height="1"/><rect x="461" y="534" width="1" height="1"/><rect x="461" y="552" width="1" height="1"/><rect x="461" y="569" width="1" height="1"/><rect x="461" y="587" width="1" height="1"/><rect x="478" y="59" width="1" height="1"/><rect x="478" y="76" width="1" height="1"/><rect x="478" y="94" width="1" height="1"/><rect x="478" y="111" width="1" height="1"/><rect x="478" y="129" width="1" height="1"/><rect x="478" y="147" width="1" height="1"/><rect x="478" y="164" width="1" height="1"/><rect x="478" y="182" width="1" height="1"/><rect x="478" y="199" width="1" height="1"/><rect x="478" y="217" width="1" height="1"/><rect x="478" y="235" width="1" height="1"/><rect x="478" y="252" width="1" height="1"/><rect x="478" y="270" width="1" height="1"/><rect x="478" y="288" width="1" height="1"/><rect x="478" y="305" width="1" height="1"/><rect x="478" y="323" width="1" height="1"/><rect x="478" y="340" width="1" height="1"/><rect x="478" y="358" width="1" height="1"/><rect x="478" y="376" width="1" height="1"/><rect x="478" y="393" width="1" height="1"/><rect x="478" y="411" width="1" height="1"/><rect x="478" y="428" width="1" height="1"/><rect x="478" y="446" width="1" height="1"/><rect x="478" y="464" width="1" height="1"/><rect x="478" y="481" width="1" height="1"/><rect x="478" y="499" width="1" height="1"/><rect x="478" y="516" width="1" height="1"/><rect x="478" y="534" width="1" height="1"/><rect x="478" y="552" width="1" height="1"/><rect x="478" y="569" width="1" height="1"/><rect x="478" y="587" width="1" height="1"/><rect x="496" y="59" width="1" height="1"/><rect x="496" y="76" width="1" height="1"/><rect x="496" y="94" width="1" height="1"/><rect x="496" y="111" width="1" height="1"/><rect x="496" y="129" width="1" height="1"/><rect x="496" y="147" width="1" height="1"/><rect x="496" y="164" width="1" height="1"/><rect x="496" y="182" width="1" height="1"/><rect x="496" y="199" width="1" height="1"/><rect x="496" y="217" width="1" height="1"/><rect x="496" y="235" width="1" height="1"/><rect x="496" y="252" width="1" height="1"/><rect x="496" y="270" width="1" height="1"/><rect x="496" y="288" width="1" height="1"/><rect x="496" y="305" width="1" height="1"/><rect x="496" y="323" width="1" height="1"/><rect x="496" y="340" width="1" height="1"/><rect x="496" y="358" width="1" height="1"/><rect x="496" y="376" width="1" height="1"/><rect x="496" y="393" width="1" height="1"/><rect x="496" y="411" width="1" height="1"/><rect x="496" y="428" width="1" height="1"/><rect x="496" y="446" width="1" height="1"/><rect x="496" y="464" width="1" height="1"/><rect x="496" y="481" width="1" height="1"/><rect x="496" y="499" width="1" height="1"/><rect x="496" y="516" width="1" height="1"/><rect x="496" y="534" width="1" height="1"/><rect x="496" y="552" width="1" height="1"/><rect x="496" y="569" width="1" height="1"/><rect x="496" y="587" width="1" height="1"/><rect x="514" y="59" width="1" height="1"/><rect x="514" y="76" width="1" height="1"/><rect x="514" y="94" width="1" height="1"/><rect x="514" y="111" width="1" height="1"/><rect x="514" y="129" width="1" height="1"/><rect x="514" y="147" width="1" height="1"/><rect x="514" y="164" width="1" height="1"/><rect x="514" y="182" width="1" height="1"/><rect x="514" y="199" width="1" height="1"/><rect x="514" y="217" width="1" height="1"/><rect x="514" y="235" width="1" height="1"/><rect x="514" y="252" width="1" height="1"/><rect x="514" y="270" width="1" height="1"/><rect x="514" y="288" width="1" height="1"/><rect x="514" y="305" width="1" height="1"/><rect x="514" y="323" width="1" height="1"/><rect x="514" y="340" width="1" height="1"/><rect x="514" y="358" width="1" height="1"/><rect x="514" y="376" width="1" height="1"/><rect x="514" y="393" width="1" height="1"/><rect x="514" y="411" width="1" height="1"/><rect x="514" y="428" width="1" height="1"/><rect x="514" y="446" width="1" height="1"/><rect x="514" y="464" width="1" height="1"/><rect x="514" y="481" width="1" height="1"/><rect x="514" y="499" width="1" height="1"/><rect x="514" y="516" width="1" height="1"/><rect x="514" y="534" width="1" height="1"/><rect x="514" y="552" width="1" height="1"/><rect x="514" y="569" width="1" height="1"/><rect x="514" y="587" width="1" height="1"/><rect x="531" y="59" width="1" height="1"/><rect x="531" y="76" width="1" height="1"/><rect x="531" y="94" width="1" height="1"/><rect x="531" y="111" width="1" height="1"/><rect x="531" y="129" width="1" height="1"/><rect x="531" y="147" width="1" height="1"/><rect x="531" y="164" width="1" height="1"/><rect x="531" y="182" width="1" height="1"/><rect x="531" y="199" width="1" height="1"/><rect x="531" y="217" width="1" height="1"/><rect x="531" y="235" width="1" height="1"/><rect x="531" y="252" width="1" height="1"/><rect x="531" y="270" width="1" height="1"/><rect x="531" y="288" width="1" height="1"/><rect x="531" y="305" width="1" height="1"/><rect x="531" y="323" width="1" height="1"/><rect x="531" y="340" width="1" height="1"/><rect x="531" y="358" width="1" height="1"/><rect x="531" y="376" width="1" height="1"/><rect x="531" y="393" width="1" height="1"/><rect x="531" y="411" width="1" height="1"/><rect x="531" y="428" width="1" height="1"/><rect x="531" y="446" width="1" height="1"/><rect x="531" y="464" width="1" height="1"/><rect x="531" y="481" width="1" height="1"/><rect x="531" y="499" width="1" height="1"/><rect x="531" y="516" width="1" height="1"/><rect x="531" y="534" width="1" height="1"/><rect x="531" y="552" width="1" height="1"/><rect x="531" y="569" width="1" height="1"/><rect x="531" y="587" width="1" height="1"/><rect x="549" y="59" width="1" height="1"/><rect x="549" y="76" width="1" height="1"/><rect x="549" y="94" width="1" height="1"/><rect x="549" y="111" width="1" height="1"/><rect x="549" y="129" width="1" height="1"/><rect x="549" y="147" width="1" height="1"/><rect x="549" y="164" width="1" height="1"/><rect x="549" y="182" width="1" height="1"/><rect x="549" y="199" width="1" height="1"/><rect x="549" y="217" width="1" height="1"/><rect x="549" y="235" width="1" height="1"/><rect x="549" y="252" width="1" height="1"/><rect x="549" y="270" width="1" height="1"/><rect x="549" y="288" width="1" height="1"/><rect x="549" y="305" width="1" height="1"/><rect x="549" y="323" width="1" height="1"/><rect x="549" y="340" width="1" height="1"/><rect x="549" y="358" width="1" height="1"/><rect x="549" y="376" width="1" height="1"/><rect x="549" y="393" width="1" height="1"/><rect x="549" y="411" width="1" height="1"/><rect x="549" y="428" width="1" height="1"/><rect x="549" y="446" width="1" height="1"/><rect x="549" y="464" width="1" height="1"/><rect x="549" y="481" width="1" height="1"/><rect x="549" y="499" width="1" height="1"/><rect x="549" y="516" width="1" height="1"/><rect x="549" y="534" width="1" height="1"/><rect x="549" y="552" width="1" height="1"/><rect x="549" y="569" width="1" height="1"/><rect x="549" y="587" width="1" height="1"/><rect x="566" y="59" width="1" height="1"/><rect x="566" y="76" width="1" height="1"/><rect x="566" y="94" width="1" height="1"/><rect x="566" y="111" width="1" height="1"/><rect x="566" y="129" width="1" height="1"/><rect x="566" y="147" width="1" height="1"/><rect x="566" y="164" width="1" height="1"/><rect x="566" y="182" width="1" height="1"/><rect x="566" y="199" width="1" height="1"/><rect x="566" y="217" width="1" height="1"/><rect x="566" y="235" width="1" height="1"/><rect x="566" y="252" width="1" height="1"/><rect x="566" y="270" width="1" height="1"/><rect x="566" y="288" width="1" height="1"/><rect x="566" y="305" width="1" height="1"/><rect x="566" y="323" width="1" height="1"/><rect x="566" y="340" width="1" height="1"/><rect x="566" y="358" width="1" height="1"/><rect x="566" y="376" width="1" height="1"/><rect x="566" y="393" width="1" height="1"/><rect x="566" y="411" width="1" height="1"/><rect x="566" y="428" width="1" height="1"/><rect x="566" y="446" width="1" height="1"/><rect x="566" y="464" width="1" height="1"/><rect x="566" y="481" width="1" height="1"/><rect x="566" y="499" width="1" height="1"/><rect x="566" y="516" width="1" height="1"/><rect x="566" y="534" width="1" height="1"/><rect x="566" y="552" width="1" height="1"/><rect x="566" y="569" width="1" height="1"/><rect x="566" y="587" width="1" height="1"/><rect x="584" y="59" width="1" height="1"/><rect x="584" y="76" width="1" height="1"/><rect x="584" y="94" width="1" height="1"/><rect x="584" y="111" width="1" height="1"/><rect x="584" y="129" width="1" height="1"/><rect x="584" y="147" width="1" height="1"/><rect x="584" y="164" width="1" height="1"/><rect x="584" y="182" width="1" height="1"/><rect x="584" y="199" width="1" height="1"/><rect x="584" y="217" width="1" height="1"/><rect x="584" y="235" width="1" height="1"/><rect x="584" y="252" width="1" height="1"/><rect x="584" y="270" width="1" height="1"/><rect x="584" y="288" width="1" height="1"/><rect x="584" y="305" width="1" height="1"/><rect x="584" y="323" width="1" height="1"/><rect x="584" y="340" width="1" height="1"/><rect x="584" y="358" width="1" height="1"/><rect x="584" y="376" width="1" height="1"/><rect x="584" y="393" width="1" height="1"/><rect x="584" y="411" width="1" height="1"/><rect x="584" y="428" width="1" height="1"/><rect x="584" y="446" width="1" height="1"/><rect x="584" y="464" width="1" height="1"/><rect x="584" y="481" width="1" height="1"/><rect x="584" y="499" width="1" height="1"/><rect x="584" y="516" width="1" height="1"/><rect x="584" y="534" width="1" height="1"/><rect x="584" y="552" width="1" height="1"/><rect x="584" y="569" width="1" height="1"/><rect x="584" y="587" width="1" height="1"/><rect x="602" y="59" width="1" height="1"/><rect x="602" y="76" width="1" height="1"/><rect x="602" y="94" width="1" height="1"/><rect x="602" y="111" width="1" height="1"/><rect x="602" y="129" width="1" height="1"/><rect x="602" y="147" width="1" height="1"/><rect x="602" y="164" width="1" height="1"/><rect x="602" y="182" width="1" height="1"/><rect x="602" y="199" width="1" height="1"/><rect x="602" y="217" width="1" height="1"/><rect x="602" y="235" width="1" height="1"/><rect x="602" y="252" width="1" height="1"/><rect x="602" y="270" width="1" height="1"/><rect x="602" y="288" width="1" height="1"/><rect x="602" y="305" width="1" height="1"/><rect x="602" y="323" width="1" height="1"/><rect x="602" y="340" width="1" height="1"/><rect x="602" y="358" width="1" height="1"/><rect x="602" y="376" width="1" height="1"/><rect x="602" y="393" width="1" height="1"/><rect x="602" y="411" width="1" height="1"/><rect x="602" y="428" width="1" height="1"/><rect x="602" y="446" width="1" height="1"/><rect x="602" y="464" width="1" height="1"/><rect x="602" y="481" width="1" height="1"/><rect x="602" y="499" width="1" height="1"/><rect x="602" y="516" width="1" height="1"/><rect x="602" y="534" width="1" height="1"/><rect x="602" y="552" width="1" height="1"/><rect x="602" y="569" width="1" height="1"/><rect x="602" y="587" width="1" height="1"/><rect x="619" y="59" width="1" height="1"/><rect x="619" y="76" width="1" height="1"/><rect x="619" y="94" width="1" height="1"/><rect x="619" y="111" width="1" height="1"/><rect x="619" y="129" width="1" height="1"/><rect x="619" y="147" width="1" height="1"/><rect x="619" y="164" width="1" height="1"/><rect x="619" y="182" width="1" height="1"/><rect x="619" y="199" width="1" height="1"/><rect x="619" y="217" width="1" height="1"/><rect x="619" y="235" width="1" height="1"/><rect x="619" y="252" width="1" height="1"/><rect x="619" y="270" width="1" height="1"/><rect x="619" y="288" width="1" height="1"/><rect x="619" y="305" width="1" height="1"/><rect x="619" y="323" width="1" height="1"/><rect x="619" y="340" width="1" height="1"/><rect x="619" y="358" width="1" height="1"/><rect x="619" y="376" width="1" height="1"/><rect x="619" y="393" width="1" height="1"/><rect x="619" y="411" width="1" height="1"/><rect x="619" y="428" width="1" height="1"/><rect x="619" y="446" width="1" height="1"/><rect x="619" y="464" width="1" height="1"/><rect x="619" y="481" width="1" height="1"/><rect x="619" y="499" width="1" height="1"/><rect x="619" y="516" width="1" height="1"/><rect x="619" y="534" width="1" height="1"/><rect x="619" y="552" width="1" height="1"/><rect x="619" y="569" width="1" height="1"/><rect x="619" y="587" width="1" height="1"/><rect x="637" y="59" width="1" height="1"/><rect x="637" y="76" width="1" height="1"/><rect x="637" y="94" width="1" height="1"/><rect x="637" y="111" width="1" height="1"/><rect x="637" y="129" width="1" height="1"/><rect x="637" y="147" width="1" height="1"/><rect x="637" y="164" width="1" height="1"/><rect x="637" y="182" width="1" height="1"/><rect x="637" y="199" width="1" height="1"/><rect x="637" y="217" width="1" height="1"/><rect x="637" y="235" width="1" height="1"/><rect x="637" y="252" width="1" height="1"/><rect x="637" y="270" width="1" height="1"/><rect x="637" y="288" width="1" height="1"/><rect x="637" y="305" width="1" height="1"/><rect x="637" y="323" width="1" height="1"/><rect x="637" y="340" width="1" height="1"/><rect x="637" y="358" width="1" height="1"/><rect x="637" y="376" width="1" height="1"/><rect x="637" y="393" width="1" height="1"/><rect x="637" y="411" width="1" height="1"/><rect x="637" y="428" width="1" height="1"/><rect x="637" y="446" width="1" height="1"/><rect x="637" y="464" width="1" height="1"/><rect x="637" y="481" width="1" height="1"/><rect x="637" y="499" width="1" height="1"/><rect x="637" y="516" width="1" height="1"/><rect x="637" y="534" width="1" height="1"/><rect x="637" y="552" width="1" height="1"/><rect x="637" y="569" width="1" height="1"/><rect x="637" y="587" width="1" height="1"/><rect x="654" y="59" width="1" height="1"/><rect x="654" y="76" width="1" height="1"/><rect x="654" y="94" width="1" height="1"/><rect x="654" y="111" width="1" height="1"/><rect x="654" y="129" width="1" height="1"/><rect x="654" y="147" width="1" height="1"/><rect x="654" y="164" width="1" height="1"/><rect x="654" y="182" width="1" height="1"/><rect x="654" y="199" width="1" height="1"/><rect x="654" y="217" width="1" height="1"/><rect x="654" y="235" width="1" height="1"/><rect x="654" y="252" width="1" height="1"/><rect x="654" y="270" width="1" height="1"/><rect x="654" y="288" width="1" height="1"/><rect x="654" y="305" width="1" height="1"/><rect x="654" y="323" width="1" height="1"/><rect x="654" y="340" width="1" height="1"/><rect x="654" y="358" width="1" height="1"/><rect x="654" y="376" width="1" height="1"/><rect x="654" y="393" width="1" height="1"/><rect x="654" y="411" width="1" height="1"/><rect x="654" y="428" width="1" height="1"/><rect x="654" y="446" width="1" height="1"/><rect x="654" y="464" width="1" height="1"/><rect x="654" y="481" width="1" height="1"/><rect x="654" y="499" width="1" height="1"/><rect x="654" y="516" width="1" height="1"/><rect x="654" y="534" width="1" height="1"/><rect x="654" y="552" width="1" height="1"/><rect x="654" y="569" width="1" height="1"/><rect x="654" y="587" width="1" height="1"/><rect x="672" y="59" width="1" height="1"/><rect x="672" y="76" width="1" height="1"/><rect x="672" y="94" width="1" height="1"/><rect x="672" y="111" width="1" height="1"/><rect x="672" y="129" width="1" height="1"/><rect x="672" y="147" width="1" height="1"/><rect x="672" y="164" width="1" height="1"/><rect x="672" y="182" width="1" height="1"/><rect x="672" y="199" width="1" height="1"/><rect x="672" y="217" width="1" height="1"/><rect x="672" y="235" width="1" height="1"/><rect x="672" y="252" width="1" height="1"/><rect x="672" y="270" width="1" height="1"/><rect x="672" y="288" width="1" height="1"/><rect x="672" y="305" width="1" height="1"/><rect x="672" y="323" width="1" height="1"/><rect x="672" y="340" width="1" height="1"/><rect x="672" y="358" width="1" height="1"/><rect x="672" y="376" width="1" height="1"/><rect x="672" y="393" width="1" height="1"/><rect x="672" y="411" width="1" height="1"/><rect x="672" y="428" width="1" height="1"/><rect x="672" y="446" width="1" height="1"/><rect x="672" y="464" width="1" height="1"/><rect x="672" y="481" width="1" height="1"/><rect x="672" y="499" width="1" height="1"/><rect x="672" y="516" width="1" height="1"/><rect x="672" y="534" width="1" height="1"/><rect x="672" y="552" width="1" height="1"/><rect x="672" y="569" width="1" height="1"/><rect x="672" y="587" width="1" height="1"/><rect x="690" y="59" width="1" height="1"/><rect x="690" y="76" width="1" height="1"/><rect x="690" y="94" width="1" height="1"/><rect x="690" y="111" width="1" height="1"/><rect x="690" y="129" width="1" height="1"/><rect x="690" y="147" width="1" height="1"/><rect x="690" y="164" width="1" height="1"/><rect x="690" y="182" width="1" height="1"/><rect x="690" y="199" width="1" height="1"/><rect x="690" y="217" width="1" height="1"/><rect x="690" y="235" width="1" height="1"/><rect x="690" y="252" width="1" height="1"/><rect x="690" y="270" width="1" height="1"/><rect x="690" y="288" width="1" height="1"/><rect x="690" y="305" width="1" height="1"/><rect x="690" y="323" width="1" height="1"/><rect x="690" y="340" width="1" height="1"/><rect x="690" y="358" width="1" height="1"/><rect x="690" y="376" width="1" height="1"/><rect x="690" y="393" width="1" height="1"/><rect x="690" y="411" width="1" height="1"/><rect x="690" y="428" width="1" height="1"/><rect x="690" y="446" width="1" height="1"/><rect x="690" y="464" width="1" height="1"/><rect x="690" y="481" width="1" height="1"/><rect x="690" y="499" width="1" height="1"/><rect x="690" y="516" width="1" height="1"/><rect x="690" y="534" width="1" height="1"/><rect x="690" y="552" width="1" height="1"/><rect x="690" y="569" width="1" height="1"/><rect x="690" y="587" width="1" height="1"/><rect x="707" y="59" width="1" height="1"/><rect x="707" y="76" width="1" height="1"/><rect x="707" y="94" width="1" height="1"/><rect x="707" y="111" width="1" height="1"/><rect x="707" y="129" width="1" height="1"/><rect x="707" y="147" width="1" height="1"/><rect x="707" y="164" width="1" height="1"/><rect x="707" y="182" width="1" height="1"/><rect x="707" y="199" width="1" height="1"/><rect x="707" y="217" width="1" height="1"/><rect x="707" y="235" width="1" height="1"/><rect x="707" y="252" width="1" height="1"/><rect x="707" y="270" width="1" height="1"/><rect x="707" y="288" width="1" height="1"/><rect x="707" y="305" width="1" height="1"/><rect x="707" y="323" width="1" height="1"/><rect x="707" y="340" width="1" height="1"/><rect x="707" y="358" width="1" height="1"/><rect x="707" y="376" width="1" height="1"/><rect x="707" y="393" width="1" height="1"/><rect x="707" y="411" width="1" height="1"/><rect x="707" y="428" width="1" height="1"/><rect x="707" y="446" width="1" height="1"/><rect x="707" y="464" width="1" height="1"/><rect x="707" y="481" width="1" height="1"/><rect x="707" y="499" width="1" height="1"/><rect x="707" y="516" width="1" height="1"/><rect x="707" y="534" width="1" height="1"/><rect x="707" y="552" width="1" height="1"/><rect x="707" y="569" width="1" height="1"/><rect x="707" y="587" width="1" height="1"/><rect x="725" y="59" width="1" height="1"/><rect x="725" y="76" width="1" height="1"/><rect x="725" y="94" width="1" height="1"/><rect x="725" y="111" width="1" height="1"/><rect x="725" y="129" width="1" height="1"/><rect x="725" y="147" width="1" height="1"/><rect x="725" y="164" width="1" height="1"/><rect x="725" y="182" width="1" height="1"/><rect x="725" y="199" width="1" height="1"/><rect x="725" y="217" width="1" height="1"/><rect x="725" y="235" width="1" height="1"/><rect x="725" y="252" width="1" height="1"/><rect x="725" y="270" width="1" height="1"/><rect x="725" y="288" width="1" height="1"/><rect x="725" y="305" width="1" height="1"/><rect x="725" y="323" width="1" height="1"/><rect x="725" y="340" width="1" height="1"/><rect x="725" y="358" width="1" height="1"/><rect x="725" y="376" width="1" height="1"/><rect x="725" y="393" width="1" height="1"/><rect x="725" y="411" width="1" height="1"/><rect x="725" y="428" width="1" height="1"/><rect x="725" y="446" width="1" height="1"/><rect x="725" y="464" width="1" height="1"/><rect x="725" y="481" width="1" height="1"/><rect x="725" y="499" width="1" height="1"/><rect x="725" y="516" width="1" height="1"/><rect x="725" y="534" width="1" height="1"/><rect x="725" y="552" width="1" height="1"/><rect x="725" y="569" width="1" height="1"/><rect x="725" y="587" width="1" height="1"/><rect x="742" y="59" width="1" height="1"/><rect x="742" y="76" width="1" height="1"/><rect x="742" y="94" width="1" height="1"/><rect x="742" y="111" width="1" height="1"/><rect x="742" y="129" width="1" height="1"/><rect x="742" y="147" width="1" height="1"/><rect x="742" y="164" width="1" height="1"/><rect x="742" y="182" width="1" height="1"/><rect x="742" y="199" width="1" height="1"/><rect x="742" y="217" width="1" height="1"/><rect x="742" y="235" width="1" height="1"/><rect x="742" y="252" width="1" height="1"/><rect x="742" y="270" width="1" height="1"/><rect x="742" y="288" width="1" height="1"/><rect x="742" y="305" width="1" height="1"/><rect x="742" y="323" width="1" height="1"/><rect x="742" y="340" width="1" height="1"/><rect x="742" y="358" width="1" height="1"/><rect x="742" y="376" width="1" height="1"/><rect x="742" y="393" width="1" height="1"/><rect x="742" y="411" width="1" height="1"/><rect x="742" y="428" width="1" height="1"/><rect x="742" y="446" width="1" height="1"/><rect x="742" y="464" width="1" height="1"/><rect x="742" y="481" width="1" height="1"/><rect x="742" y="499" width="1" height="1"/><rect x="742" y="516" width="1" height="1"/><rect x="742" y="534" width="1" height="1"/><rect x="742" y="552" width="1" height="1"/><rect x="742" y="569" width="1" height="1"/><rect x="742" y="587" width="1" height="1"/><rect x="760" y="59" width="1" height="1"/><rect x="760" y="76" width="1" height="1"/><rect x="760" y="94" width="1" height="1"/><rect x="760" y="111" width="1" height="1"/><rect x="760" y="129" width="1" height="1"/><rect x="760" y="147" width="1" height="1"/><rect x="760" y="164" width="1" height="1"/><rect x="760" y="182" width="1" height="1"/><rect x="760" y="199" width="1" height="1"/><rect x="760" y="217" width="1" height="1"/><rect x="760" y="235" width="1" height="1"/><rect x="760" y="252" width="1" height="1"/><rect x="760" y="270" width="1" height="1"/><rect x="760" y="288" width="1" height="1"/><rect x="760" y="305" width="1" height="1"/><rect x="760" y="323" width="1" height="1"/><rect x="760" y="340" width="1" height="1"/><rect x="760" y="358" width="1" height="1"/><rect x="760" y="376" width="1" height="1"/><rect x="760" y="393" width="1" height="1"/><rect x="760" y="411" width="1" height="1"/><rect x="760" y="428" width="1" height="1"/><rect x="760" y="446" width="1" height="1"/><rect x="760" y="464" width="1" height="1"/><rect x="760" y="481" width="1" height="1"/><rect x="760" y="499" width="1" height="1"/><rect x="760" y="516" width="1" height="1"/><rect x="760" y="534" width="1" height="1"/><rect x="760" y="552" width="1" height="1"/><rect x="760" y="569" width="1" height="1"/><rect x="760" y="587" width="1" height="1"/><rect x="778" y="59" width="1" height="1"/><rect x="778" y="76" width="1" height="1"/><rect x="778" y="94" width="1" height="1"/><rect x="778" y="111" width="1" height="1"/><rect x="778" y="129" width="1" height="1"/><rect x="778" y="147" width="1" height="1"/><rect x="778" y="164" width="1" height="1"/><rect x="778" y="182" width="1" height="1"/><rect x="778" y="199" width="1" height="1"/><rect x="778" y="217" width="1" height="1"/><rect x="778" y="235" width="1" height="1"/><rect x="778" y="252" width="1" height="1"/><rect x="778" y="270" width="1" height="1"/><rect x="778" y="288" width="1" height="1"/><rect x="778" y="305" width="1" height="1"/><rect x="778" y="323" width="1" height="1"/><rect x="778" y="340" width="1" height="1"/><rect x="778" y="358" width="1" height="1"/><rect x="778" y="376" width="1" height="1"/><rect x="778" y="393" width="1" height="1"/><rect x="778" y="411" width="1" height="1"/><rect x="778" y="428" width="1" height="1"/><rect x="778" y="446" width="1" height="1"/><rect x="778" y="464" width="1" height="1"/><rect x="778" y="481" width="1" height="1"/><rect x="778" y="499" width="1" height="1"/><rect x="778" y="516" width="1" height="1"/><rect x="778" y="534" width="1" height="1"/><rect x="778" y="552" width="1" height="1"/><rect x="778" y="569" width="1" height="1"/><rect x="778" y="587" width="1" height="1"/><rect x="795" y="59" width="1" height="1"/><rect x="795" y="76" width="1" height="1"/><rect x="795" y="94" width="1" height="1"/><rect x="795" y="111" width="1" height="1"/><rect x="795" y="129" width="1" height="1"/><rect x="795" y="147" width="1" height="1"/><rect x="795" y="164" width="1" height="1"/><rect x="795" y="182" width="1" height="1"/><rect x="795" y="199" width="1" height="1"/><rect x="795" y="217" width="1" height="1"/><rect x="795" y="235" width="1" height="1"/><rect x="795" y="252" width="1" height="1"/><rect x="795" y="270" width="1" height="1"/><rect x="795" y="288" width="1" height="1"/><rect x="795" y="305" width="1" height="1"/><rect x="795" y="323" width="1" height="1"/><rect x="795" y="340" width="1" height="1"/><rect x="795" y="358" width="1" height="1"/><rect x="795" y="376" width="1" height="1"/><rect x="795" y="393" width="1" height="1"/><rect x="795" y="411" width="1" height="1"/><rect x="795" y="428" width="1" height="1"/><rect x="795" y="446" width="1" height="1"/><rect x="795" y="464" width="1" height="1"/><rect x="795" y="481" width="1" height="1"/><rect x="795" y="499" width="1" height="1"/><rect x="795" y="516" width="1" height="1"/><rect x="795" y="534" width="1" height="1"/><rect x="795" y="552" width="1" height="1"/><rect x="795" y="569" width="1" height="1"/><rect x="795" y="587" width="1" height="1"/></g>
<g shape-rendering="crispEdges"><rect x="73" y="48" width="1" height="552" fill="#404040"/><rect x="4" y="464" width="800" height="1" fill="#404040"/><rect x="168" y="153" width="5" height="6" fill="#d42200"/><rect x="168" y="206" width="5" height="6" fill="#d42200"/><rect x="168" y="241" width="5" height="6" fill="#d42200"/><rect x="168" y="294" width="5" height="6" fill="#d42200"/><rect x="168" y="329" width="5" height="6" fill="#d42200"/><rect x="168" y="382" width="5" height="6" fill="#d42200"/><rect x="353" y="241" width="5" height="6" fill="#d42200"/><rect x="353" y="294" width="5" height="6" fill="#d42200"/><rect x="354" y="119" width="3" height="3" fill="#d42200"/><rect x="169" y="225" width="3" height="3" fill="#d42200"/><rect x="169" y="313" width="3" height="3" fill="#d42200"/><rect x="170" y="120" width="186" height="1" fill="#00ccee"/><rect x="355" y="120" width="1" height="125" fill="#00ccee"/><rect x="355" y="296" width="1" height="142" fill="#00ccee"/><rect x="170" y="437" width="186" height="1" fill="#00ccee"/><rect x="170" y="120" width="1" height="36" fill="#00ccee"/><rect x="170" y="208" width="1" height="37" fill="#00ccee"/><rect x="170" y="296" width="1" height="37" fill="#00ccee"/><rect x="170" y="384" width="1" height="54" fill="#00ccee"/><rect x="170" y="159" width="1" height="20" fill="#88dd00"/><rect x="161" y="178" width="19" height="1" fill="#88dd00"/><rect x="161" y="186" width="19" height="1" fill="#88dd00"/><rect x="170" y="186" width="1" height="20" fill="#88dd00"/><rect x="172" y="162" width="6" height="1" fill="#88dd00"/><rect x="175" y="160" width="1" height="5" fill="#88dd00"/><rect x="175" y="249" width="5" height="1" fill="#88dd00"/><rect x="177" y="247" width="1" height="5" fill="#88dd00"/><rect x="357" y="250" width="6" height="1" fill="#88dd00"/><rect x="359" y="248" width="1" height="5" fill="#88dd00"/><rect x="153" y="340" width="9" height="1" fill="#88dd00"/><rect x="157" y="336" width="1" height="10" fill="#88dd00"/><rect x="170" y="335" width="1" height="47" fill="#88dd00"/></g>
<g shape-rendering="crispEdges"><g fill="#88dd00"><rect x="348" y="255" width="1" height="1"/><rect x="348" y="263" width="1" height="1"/><rect x="348" y="272" width="1" height="1"/><rect x="348" y="281" width="1" height="1"/><rect x="349" y="255" width="1" height="1"/><rect x="349" y="263" width="1" height="1"/><rect x="349" y="272" width="1" height="1"/><rect x="349" y="281" width="1" height="1"/><rect x="350" y="254" width="1" height="1"/><rect x="350" y="256" width="1" height="1"/><rect x="350" y="262" width="1" height="1"/><rect x="350" y="264" width="1" height="1"/><rect x="350" y="271" width="1" height="1"/><rect x="350" y="273" width="1" height="1"/><rect x="350" y="280" width="1" height="1"/><rect x="350" y="282" width="1" height="1"/><rect x="351" y="254" width="1" height="1"/><rect x="351" y="256" width="1" height="1"/><rect x="351" y="262" width="1" height="1"/><rect x="351" y="264" width="1" height="1"/><rect x="351" y="271" width="1" height="1"/><rect x="351" y="273" width="1" height="1"/><rect x="351" y="280" width="1" height="1"/><rect x="351" y="282" width="1" height="1"/><rect x="352" y="253" width="1" height="1"/><rect x="352" y="256" width="1" height="1"/><rect x="352" y="262" width="1" height="1"/><rect x="352" y="264" width="1" height="1"/><rect x="352" y="271" width="1" height="1"/><rect x="352" y="273" width="1" height="1"/><rect x="352" y="280" width="1" height="1"/><rect x="352" y="282" width="1" height="1"/><rect x="353" y="253" width="1" height="1"/><rect x="353" y="256" width="1" height="1"/><rect x="353" y="262" width="1" height="1"/><rect x="353" y="265" width="1" height="1"/><rect x="353" y="271" width="1" height="1"/><rect x="353" y="274" width="1" height="1"/><rect x="353" y="280" width="1" height="1"/><rect x="353" y="282" width="1" height="1"/><rect x="354" y="252" width="1" height="1"/><rect x="354" y="257" width="1" height="1"/><rect x="354" y="261" width="1" height="1"/><rect x="354" y="265" width="1" height="1"/><rect x="354" y="270" width="1" height="1"/><rect x="354" y="274" width="1" height="1"/><rect x="354" y="279" width="1" height="1"/><rect x="354" y="283" width="1" height="1"/><rect x="355" y="247" width="1" height="1"/><rect x="355" y="248" width="1" height="1"/><rect x="355" y="249" width="1" height="1"/><rect x="355" y="250" width="1" height="1"/><rect x="355" y="251" width="1" height="1"/><rect x="355" y="252" width="1" height="1"/><rect x="355" y="257" width="1" height="1"/><rect x="355" y="261" width="1" height="1"/><rect x="355" y="265" width="1" height="1"/><rect x="355" y="266" width="1" height="1"/><rect x="355" y="270" width="1" height="1"/><rect x="355" y="274" width="1" height="1"/><rect x="355" y="275" width="1" height="1"/><rect x="355" y="279" width="1" height="1"/><rect x="355" y="283" width="1" height="1"/><rect x="355" y="288" width="1" height="1"/><rect x="355" y="289" width="1" height="1"/><rect x="355" y="290" width="1" height="1"/><rect x="355" y="291" width="1" height="1"/><rect x="355" y="292" width="1" height="1"/><rect x="355" y="293" width="1" height="1"/><rect x="356" y="257" width="1" height="1"/><rect x="356" y="261" width="1" height="1"/><rect x="356" y="266" width="1" height="1"/><rect x="356" y="270" width="1" height="1"/><rect x="356" y="275" width="1" height="1"/><rect x="356" y="279" width="1" height="1"/><rect x="356" y="283" width="1" height="1"/><rect x="356" y="288" width="1" height="1"/><rect x="357" y="258" width="1" height="1"/><rect x="357" y="260" width="1" height="1"/><rect x="357" y="266" width="1" height="1"/><rect x="357" y="269" width="1" height="1"/><rect x="357" y="275" width="1" height="1"/><rect x="357" y="278" width="1" height="1"/><rect x="357" y="284" width="1" height="1"/><rect x="357" y="287" width="1" height="1"/><rect x="358" y="258" width="1" height="1"/><rect x="358" y="260" width="1" height="1"/><rect x="358" y="267" width="1" height="1"/><rect x="358" y="269" width="1" height="1"/><rect x="358" y="276" width="1" height="1"/><rect x="358" y="278" width="1" height="1"/><rect x="358" y="284" width="1" height="1"/><rect x="358" y="287" width="1" height="1"/><rect x="359" y="258" width="1" height="1"/><rect x="359" y="260" width="1" height="1"/><rect x="359" y="267" width="1" height="1"/><rect x="359" y="269" width="1" height="1"/><rect x="359" y="276" width="1" height="1"/><rect x="359" y="278" width="1" height="1"/><rect x="359" y="284" width="1" height="1"/><rect x="359" y="286" width="1" height="1"/><rect x="360" y="258" width="1" height="1"/><rect x="360" y="260" width="1" height="1"/><rect x="360" y="267" width="1" height="1"/><rect x="360" y="269" width="1" height="1"/><rect x="360" y="276" width="1" height="1"/><rect x="360" y="278" width="1" height="1"/><rect x="360" y="284" width="1" height="1"/><rect x="360" y="286" width="1" height="1"/><rect x="361" y="259" width="1" height="1"/><rect x="361" y="268" width="1" height="1"/><rect x="361" y="277" width="1" height="1"/><rect x="361" y="285" width="1" height="1"/><rect x="362" y="259" width="1" height="1"/><rect x="362" y="268" width="1" height="1"/><rect x="362" y="277" width="1" height="1"/><rect x="362" y="285" width="1" height="1"/></g><circle cx="170.5" cy="358.5" r="13" fill="none" stroke="#88dd00" stroke-width="1"/><g fill="#88dd00"><rect x="164" y="256" width="1" height="1"/><rect x="164" y="257" width="1" height="1"/><rect x="164" y="258" width="1" height="1"/><rect x="164" y="262" width="1" height="1"/><rect x="164" y="263" width="1" height="1"/><rect x="164" y="264" width="1" height="1"/><rect x="164" y="269" width="1" height="1"/><rect x="164" y="270" width="1" height="1"/><rect x="164" y="271" width="1" height="1"/><rect x="164" y="275" width="1" height="1"/><rect x="164" y="276" width="1" height="1"/><rect x="164" y="277" width="1" height="1"/><rect x="164" y="278" width="1" height="1"/><rect x="164" y="282" width="1" height="1"/><rect x="164" y="283" width="1" height="1"/><rect x="164" y="284" width="1" height="1"/><rect x="165" y="254" width="1" height="1"/><rect x="165" y="255" width="1" height="1"/><rect x="165" y="259" width="1" height="1"/><rect x="165" y="261" width="1" height="1"/><rect x="165" y="265" width="1" height="1"/><rect x="165" y="266" width="1" height="1"/><rect x="165" y="268" width="1" height="1"/><rect x="165" y="272" width="1" height="1"/><rect x="165" y="274" width="1" height="1"/><rect x="165" y="279" width="1" height="1"/><rect x="165" y="281" width="1" height="1"/><rect x="165" y="285" width="1" height="1"/><rect x="166" y="253" width="1" height="1"/><rect x="166" y="260" width="1" height="1"/><rect x="166" y="267" width="1" height="1"/><rect x="166" y="273" width="1" height="1"/><rect x="166" y="280" width="1" height="1"/><rect x="166" y="286" width="1" height="1"/><rect x="167" y="252" width="1" height="1"/><rect x="167" y="253" width="1" height="1"/><rect x="167" y="259" width="1" height="1"/><rect x="167" y="261" width="1" height="1"/><rect x="167" y="266" width="1" height="1"/><rect x="167" y="268" width="1" height="1"/><rect x="167" y="272" width="1" height="1"/><rect x="167" y="274" width="1" height="1"/><rect x="167" y="279" width="1" height="1"/><rect x="167" y="281" width="1" height="1"/><rect x="167" y="287" width="1" height="1"/><rect x="168" y="252" width="1" height="1"/><rect x="168" y="259" width="1" height="1"/><rect x="168" y="261" width="1" height="1"/><rect x="168" y="265" width="1" height="1"/><rect x="168" y="268" width="1" height="1"/><rect x="168" y="272" width="1" height="1"/><rect x="168" y="274" width="1" height="1"/><rect x="168" y="279" width="1" height="1"/><rect x="168" y="281" width="1" height="1"/><rect x="168" y="287" width="1" height="1"/><rect x="168" y="288" width="1" height="1"/><rect x="169" y="251" width="1" height="1"/><rect x="169" y="252" width="1" height="1"/><rect x="169" y="258" width="1" height="1"/><rect x="169" y="261" width="1" height="1"/><rect x="169" y="262" width="1" height="1"/><rect x="169" y="265" width="1" height="1"/><rect x="169" y="269" width="1" height="1"/><rect x="169" y="271" width="1" height="1"/><rect x="169" y="274" width="1" height="1"/><rect x="169" y="275" width="1" height="1"/><rect x="169" y="278" width="1" height="1"/><rect x="169" y="281" width="1" height="1"/><rect x="169" y="282" width="1" height="1"/><rect x="169" y="288" width="1" height="1"/><rect x="170" y="247" width="1" height="1"/><rect x="170" y="248" width="1" height="1"/><rect x="170" y="249" width="1" height="1"/><rect x="170" y="250" width="1" height="1"/><rect x="170" y="251" width="1" height="1"/><rect x="170" y="258" width="1" height="1"/><rect x="170" y="262" width="1" height="1"/><rect x="170" y="264" width="1" height="1"/><rect x="170" y="269" width="1" height="1"/><rect x="170" y="271" width="1" height="1"/><rect x="170" y="275" width="1" height="1"/><rect x="170" y="278" width="1" height="1"/><rect x="170" y="282" width="1" height="1"/><rect x="170" y="289" width="1" height="1"/><rect x="170" y="290" width="1" height="1"/><rect x="170" y="291" width="1" height="1"/><rect x="170" y="292" width="1" height="1"/><rect x="170" y="293" width="1" height="1"/><rect x="171" y="257" width="1" height="1"/><rect x="171" y="262" width="1" height="1"/><rect x="171" y="263" width="1" height="1"/><rect x="171" y="269" width="1" height="1"/><rect x="171" y="270" width="1" height="1"/><rect x="171" y="275" width="1" height="1"/><rect x="171" y="277" width="1" height="1"/><rect x="171" y="282" width="1" height="1"/><rect x="172" y="257" width="1" height="1"/><rect x="172" y="262" width="1" height="1"/><rect x="172" y="269" width="1" height="1"/><rect x="172" y="270" width="1" height="1"/><rect x="172" y="275" width="1" height="1"/><rect x="172" y="277" width="1" height="1"/><rect x="172" y="282" width="1" height="1"/><rect x="173" y="257" width="1" height="1"/><rect x="173" y="261" width="1" height="1"/><rect x="173" y="262" width="1" height="1"/><rect x="173" y="268" width="1" height="1"/><rect x="173" y="269" width="1" height="1"/><rect x="173" y="270" width="1" height="1"/><rect x="173" y="274" width="1" height="1"/><rect x="173" y="275" width="1" height="1"/><rect x="173" y="277" width="1" height="1"/><rect x="173" y="281" width="1" height="1"/><rect x="173" y="282" width="1" height="1"/><rect x="174" y="257" width="1" height="1"/><rect x="174" y="261" width="1" height="1"/><rect x="174" y="263" width="1" height="1"/><rect x="174" y="268" width="1" height="1"/><rect x="174" y="270" width="1" height="1"/><rect x="174" y="274" width="1" height="1"/><rect x="174" y="277" width="1" height="1"/><rect x="174" y="281" width="1" height="1"/><rect x="175" y="258" width="1" height="1"/><rect x="175" y="261" width="1" height="1"/><rect x="175" y="264" width="1" height="1"/><rect x="175" y="268" width="1" height="1"/><rect x="175" y="271" width="1" height="1"/><rect x="175" y="274" width="1" height="1"/><rect x="175" y="277" width="1" height="1"/><rect x="175" y="281" width="1" height="1"/><rect x="176" y="258" width="1" height="1"/><rect x="176" y="259" width="1" height="1"/><rect x="176" y="261" width="1" height="1"/><rect x="176" y="264" width="1" height="1"/><rect x="176" y="267" width="1" height="1"/><rect x="176" y="268" width="1" height="1"/><rect x="176" y="271" width="1" height="1"/><rect x="176" y="272" width="1" height="1"/><rect x="176" y="274" width="1" height="1"/><rect x="176" y="277" width="1" height="1"/><rect x="176" y="278" width="1" height="1"/><rect x="176" y="281" width="1" height="1"/><rect x="177" y="259" width="1" height="1"/><rect x="177" y="260" width="1" height="1"/><rect x="177" y="265" width="1" height="1"/><rect x="177" y="266" width="1" height="1"/><rect x="177" y="272" width="1" height="1"/><rect x="177" y="273" width="1" height="1"/><rect x="177" y="279" width="1" height="1"/><rect x="177" y="280" width="1" height="1"/></g></g>
</svg>
<div class="abs" style="left:0;top:0;width:808px;height:623px;will-change:transform"><div class="t" style="left:362px;top:112px;font-size:16.5px;line-height:20px;letter-spacing:0px;color:#00ccee;transform-origin:0 0;transform:scaleX(1)">A</div><div class="t" style="left:177px;top:217px;font-size:16.5px;line-height:20px;letter-spacing:0px;color:#00ccee;transform-origin:0 0;transform:scaleX(1)">B</div><div class="t" style="left:177px;top:305px;font-size:16.5px;line-height:20px;letter-spacing:0px;color:#00ccee;transform-origin:0 0;transform:scaleX(1)">C</div><div class="t" style="left:183px;top:164px;font-size:9.5px;line-height:11px;letter-spacing:0px;color:#cccccc;transform-origin:0 0;transform:scaleX(1)">C0</div><div class="t" style="left:183px;top:177px;font-size:11px;line-height:13px;letter-spacing:0px;color:#cccccc;transform-origin:0 0;transform:scaleX(1)">50nF</div><div class="t" style="left:182px;top:190px;font-size:11px;line-height:13px;letter-spacing:0px;color:#cccccc;transform-origin:0 0;transform:scaleX(1.05)">m=1</div><div class="t" style="left:179px;top:254px;font-size:9.5px;line-height:11px;letter-spacing:0px;color:#cccccc;transform-origin:0 0;transform:scaleX(1)">l1</div><div class="t" style="left:178px;top:269px;font-size:11px;line-height:13px;letter-spacing:0.3px;color:#cccccc;transform-origin:0 0;transform:scaleX(1)">10mH</div><div class="t" style="left:367px;top:252px;font-size:9.5px;line-height:11px;letter-spacing:0px;color:#cccccc;transform-origin:0 0;transform:scaleX(1.1818)">R0</div><div class="t" style="left:367px;top:266px;font-size:9.5px;line-height:11px;letter-spacing:0px;color:#cccccc;transform-origin:0 0;transform:scaleX(1.1111)">1k</div><div class="t" style="left:368px;top:279px;font-size:9.5px;line-height:11px;letter-spacing:0px;color:#cccccc;transform-origin:0 0;transform:scaleX(0.9474)">m=1</div><div class="t" style="left:187px;top:342px;font-size:9.5px;line-height:11px;letter-spacing:0px;color:#cccccc;transform-origin:0 0;transform:scaleX(1.0083)">E1</div><div class="t" style="left:188px;top:357px;font-size:9.5px;line-height:11px;letter-spacing:0.033px;color:#cccccc;transform-origin:0 0;transform:scaleX(1)">'3*cos(time*time*time*1e11)'</div><div class="t" style="left:165px;top:159px;font-size:5.5px;line-height:7px;letter-spacing:0px;color:#b0b0b0;transform-origin:0 0;transform:scaleX(1)">1</div><div class="t" style="left:165px;top:199px;font-size:5.5px;line-height:7px;letter-spacing:0px;color:#b0b0b0;transform-origin:0 0;transform:scaleX(1)">2</div><div class="t" style="left:348px;top:247px;font-size:5.5px;line-height:7px;letter-spacing:0px;color:#b0b0b0;transform-origin:0 0;transform:scaleX(1)">1</div><div class="t" style="left:348px;top:287px;font-size:5.5px;line-height:7px;letter-spacing:0px;color:#b0b0b0;transform-origin:0 0;transform:scaleX(1)">2</div></div>
<div class="abs" style="left:4px;top:600px;width:800px;height:19px;background:#d9d9d9"></div>
<div class="abs" style="left:38px;top:601px;width:64px;height:17px;background:#98fb98;border-top:1px solid #5b965b;border-left:1px solid #5b965b;border-right:1px solid #88e488;border-bottom:1px solid #90ee90"></div>
<div class="abs" style="left:137px;top:601px;width:64px;height:17px;background:#98fb98;border-top:1px solid #5b965b;border-left:1px solid #5b965b;border-right:1px solid #88e488;border-bottom:1px solid #90ee90"></div>
<div class="abs" style="left:284px;top:601px;width:64px;height:17px;background:#d9d9d9;border-top:1px solid #828282;border-left:1px solid #828282;border-right:1px solid #fff;border-bottom:1px solid #fff"></div>
<div class="t" style="left:29px;top:3px;font-size:11.5px;line-height:14px;letter-spacing:0.338px;color:#ededed">xschem - rlc.sch*</div><div class="t" style="left:10px;top:27px;font-size:11px;line-height:13px;letter-spacing:0.6px;color:#000000">File</div><div class="t" style="left:38px;top:27px;font-size:11px;line-height:13px;letter-spacing:0.3px;color:#000000">Edit</div><div class="t" style="left:68px;top:27px;font-size:11px;line-height:13px;letter-spacing:0px;color:#000000">Options</div><div class="t" style="left:116px;top:27px;font-size:11px;line-height:13px;letter-spacing:0px;color:#000000">View</div><div class="t" style="left:149px;top:27px;font-size:11px;line-height:13px;letter-spacing:0.1px;color:#000000">Properties</div><div class="t" style="left:209px;top:27px;font-size:11px;line-height:13px;letter-spacing:0.18px;color:#000000">Layers</div><div class="t" style="left:253px;top:27px;font-size:11px;line-height:13px;letter-spacing:0px;color:#000000">Tools</div><div class="t" style="left:289px;top:27px;font-size:11px;line-height:13px;letter-spacing:0px;color:#000000">Symbol</div><div class="t" style="left:335px;top:27px;font-size:11px;line-height:13px;letter-spacing:0.338px;color:#000000">Highlight</div><div class="t" style="left:391px;top:27px;font-size:11px;line-height:13px;letter-spacing:0.2px;color:#000000">Simulation</div><div class="t" style="left:600px;top:27px;font-size:11px;line-height:13px;letter-spacing:0px;color:#000000">Waves</div><div class="t" style="left:657px;top:27px;font-size:11px;line-height:13px;letter-spacing:0.258px;color:#000000">Simulate</div><div class="t" style="left:724px;top:27px;font-size:11px;line-height:13px;letter-spacing:0.45px;color:#000000">Netlist</div><div class="t" style="left:773px;top:27px;font-size:11px;line-height:13px;letter-spacing:0.6px;color:#000000">Help</div><div class="t" style="left:6px;top:603px;font-size:11px;line-height:13px;letter-spacing:-0.9px;color:#000000">SNAP:</div><div class="t" style="left:40px;top:603px;font-size:11px;line-height:13px;letter-spacing:0px;color:#000000">10</div><div class="t" style="left:105px;top:603px;font-size:11px;line-height:13px;letter-spacing:-0.225px;color:#000000">GRID:</div><div class="t" style="left:139px;top:603px;font-size:11px;line-height:13px;letter-spacing:0.9px;color:#000000">20</div><div class="t" style="left:203px;top:603px;font-size:11px;line-height:13px;letter-spacing:-0.45px;color:#000000">NETLIST MODE:</div><div class="t" style="left:286px;top:603px;font-size:11px;line-height:13px;letter-spacing:0.225px;color:#000000">spice</div><div class="t" style="left:350px;top:603px;font-size:11px;line-height:13px;letter-spacing:0.153px;color:#000000">mouse = -0 -150 - /mnt/x/home/schippes/x/rlc.sch</div><div class="t" style="left:603px;top:603px;font-size:11px;line-height:13px;letter-spacing:0.18px;color:#000000">selected: 0</div>
</body></html>
